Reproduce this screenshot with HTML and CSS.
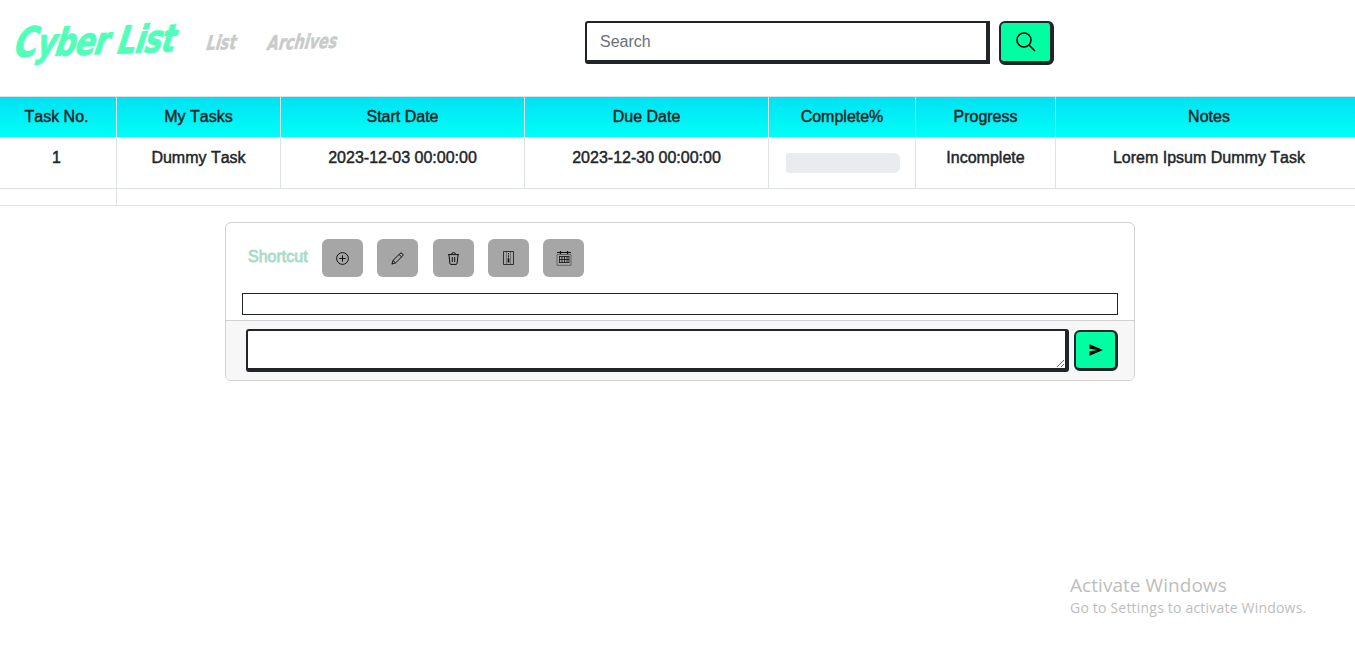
FILE: index.html
```html
<!DOCTYPE html>
<html lang="en">
<head>
<meta charset="utf-8">
<title>Cyber List</title>
<link rel="stylesheet" href="styles.css">
</head>
<body>
<header class="navbar">
  <a class="brand"><span>Cyber List</span></a>
  <a class="nav-link nav-list"><span>List</span></a>
  <a class="nav-link nav-archives"><span>Archives</span></a>
  <form class="search">
    <input class="search-input" type="text" placeholder="Search" aria-label="Search">
    <button class="search-button" type="button" aria-label="Search">
      <svg width="20" height="20" viewBox="0 0 20 20" fill="none" stroke="currentColor" stroke-width="1.5"><circle cx="8" cy="8" r="7"/><path d="m13 13 6 6"/></svg>
    </button>
  </form>
</header>
<section class="tasks">
  <div class="row head"><div>Task No.</div><div>My Tasks</div><div>Start Date</div><div>Due Date</div><div>Complete%</div><div>Progress</div><div>Notes</div></div>
  <div class="row task"><div>1</div><div>Dummy Task</div><div>2023-12-03 00:00:00</div><div>2023-12-30 00:00:00</div><div><span class="progress"></span></div><div>Incomplete</div><div>Lorem Ipsum Dummy Task</div></div>
  <div class="row empty"><div></div><div class="rest"></div></div>
</section>
<main class="card">
  <div class="card-body">
    <div class="shortcuts">
      <span class="shortcut-label">Shortcut</span>
      <button class="tool" aria-label="Add"><svg width="13" height="13" viewBox="0 0 13 13" fill="none" stroke="currentColor"><circle cx="6.5" cy="6.5" r="5.9"/><path d="M6.5 3.3v6.4M3.3 6.5h6.4"/></svg></button>
      <button class="tool" aria-label="Edit"><svg width="13" height="13" viewBox="0 0 13 13" fill="none" stroke="currentColor" stroke-linejoin="round"><path d="M.9 12.1 2 8.5 9 1.4Q10 .5 11 1.3l.7.7q.9.9 0 1.9l-7.1 7zM8 2.5 10.6 5M2 8.5l2.6 2.4"/></svg></button>
      <button class="tool" aria-label="Delete"><svg width="13" height="13" viewBox="0 0 13 13" fill="none" stroke="currentColor"><path d="M1 2.6h11M4.5 2.3Q4.6.6 6.5.6t2 1.7M2 3l.9 8.3q.1 1.1 1.1 1.1h5q1 0 1.1-1.1L11 3M5.3 5v5M7.7 5v5"/></svg></button>
      <button class="tool" aria-label="Archive"><svg width="13" height="14" viewBox="0 0 13 14" fill="none" stroke="currentColor"><path d="M1.5.5h10v13h-10z" stroke-width=".8"/><path d="M4.5.5v13M8.5.5v13" stroke-width=".35"/><path d="M6.5 2v6" stroke-dasharray="1 .6"/><path d="M6.5 7.5v4" stroke-width="1.7"/></svg></button>
      <button class="tool" aria-label="Calendar"><svg width="16" height="16" viewBox="0 0 16 16" fill="none" stroke="currentColor"><path d="M1 2.5h14M4.5 1v3M11.5 1v3" stroke-width="1.2"/><path d="M1 4.5h14v10.8H1z" stroke-width=".45"/><path d="M3 6.5h10M3 9.5h10M3 12.5h10M3.5 6v7M6 6v7M8.5 6v7M11 6v7M13 6v7" stroke-width=".8"/></svg></button>
    </div>
    <div class="output"></div>
  </div>
  <footer class="card-footer">
    <textarea class="message" aria-label="Message"></textarea>
    <button class="send" aria-label="Send"><svg width="14" height="12" viewBox="0 0 14 12" fill="currentColor"><path d="M.5.3 14 6 .5 11.7V7.3L9 6 .5 4.7z"/></svg></button>
  </footer>
</main>
<aside class="watermark"><div class="watermark-title">Activate Windows</div><div class="watermark-text">Go to Settings to activate Windows.</div></aside>
</body>
</html>
```
FILE: styles.css
```css
* { box-sizing: border-box; }
body { margin: 0; height: 649px; overflow: hidden; position: relative; background: #fff; color: #212529; font: 16px/24px "Liberation Sans", Arial, sans-serif; font-kerning: none; }
button { padding: 0; color: #000; display: flex; align-items: center; justify-content: center; }
.navbar { height: 96px; display: flex; align-items: flex-start; }
.brand, .nav-link { font-family: "DejaVu Sans Condensed", "DejaVu Sans", sans-serif; font-stretch: condensed; font-weight: 700; font-style: italic; white-space: nowrap; }
.brand span, .nav-link span { display: inline-block; transform-origin: 0 50%; }
.brand { width: 207px; padding: 19px 0 0 16px; font-size: 38px; line-height: 48px; letter-spacing: -1px; color: #52ffba; -webkit-text-stroke: 1px currentColor; }
.brand span { transform: rotate(-2deg) skewX(-12deg) scaleX(.86); }
.brand span::first-letter { font-size: 41px; }
.nav-link { padding-top: 30px; font-size: 20px; line-height: 26px; color: #c8cbca; -webkit-text-stroke: .5px currentColor; }
.nav-list { width: 61px; }
.nav-list span, .nav-archives span { transform: rotate(-2deg) skewX(-10deg) scaleX(.8); }
.nav-archives { width: 317px; }
.search { display: flex; align-items: flex-start; gap: 9px; padding-top: 21px; }
.search-input { width: 405px; height: 43px; padding: 1px 13px 0; border: solid #212529; border-width: 2px 4px 4px 2px; border-radius: 3px 0 0 3px; font: 16px "Liberation Sans", Arial, sans-serif; outline: 0; }
.search-input::placeholder { color: #6b7075; opacity: 1; }
.search-button { width: 55px; height: 44px; border: solid #212529; border-width: 2px 4px 4px 2px; border-radius: 6px; background: #00ffa3; }
.tasks { border-top: 1px solid #dee2e6; }
.row { display: grid; grid-template-columns: 117px 164px 244px 244px 147px 140px 1fr; text-align: center; -webkit-text-stroke: .45px currentColor; }
.row > div { border: solid #dee2e6; border-width: 0 1px 1px 0; padding-top: 8px; }
.row > div:first-child { padding-right: 3px; }
.row > div:last-child { border-right: 0; padding-left: 7px; }
.head > div { height: 41px; background: linear-gradient(#00e1f3, #00fff7); }
.task > div { height: 51px; }
.empty > div { height: 17px; padding: 0; }
.empty .rest { grid-column: 2 / -1; }
.progress { display: block; height: 20px; margin: 7px 15px 0 17px; border-radius: 3px 6px 6px 3px; background: #e9ecef; }
.card { width: 910px; height: 159px; margin: 16px 0 0 225px; border: 1px solid #d0d0d0; border-radius: 6px; overflow: hidden; }
.card-body { height: 97px; padding: 16px 16px 0; }
.shortcuts { display: flex; height: 38px; padding-left: 6px; }
.shortcut-label { width: 74px; padding-top: 6px; color: #a8dcc7; -webkit-text-stroke: .8px currentColor; }
.tool { width: 41px; height: 38px; margin-right: 14.25px; border: 0; border-radius: 6px; background: #a6a6a6; color: #111; }
.output { height: 22px; margin-top: 16px; border: 1px solid #212529; }
.card-footer { height: 60px; padding: 8px 16px 0 20px; border-top: 1px solid #d0d0d0; background: #f7f7f7; display: flex; gap: 5px; }
.message { width: 823px; height: 43px; border: solid #212529; border-width: 2px 4px 4px 2px; border-radius: 3px; background: #fff; }
.send { width: 44px; height: 41px; margin-top: 1px; border: solid #212529; border-width: 2px 3px 3px 2px; border-radius: 6px; background: #00ffa3; }
.watermark { position: absolute; left: 1070px; top: 572px; color: #bdbdbd; font-family: "Open Sans", sans-serif; white-space: nowrap; }
.watermark-title { font-size: 19px; line-height: 26px; letter-spacing: .05px; }
.watermark-text { font-size: 14px; line-height: 20px; letter-spacing: .2px; }
```
